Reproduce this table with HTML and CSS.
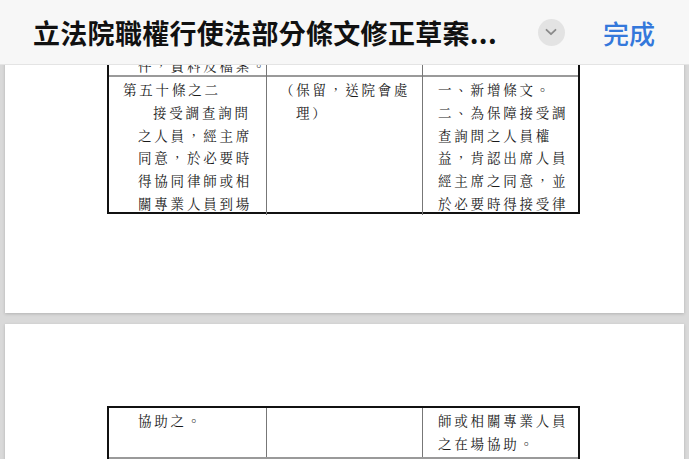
FILE: index.html
```html
<!DOCTYPE html>
<html lang="zh-Hant">
<head>
<meta charset="utf-8">
<title>立法院職權行使法部分條文修正草案</title>
<link rel="stylesheet" href="styles.css">
</head>
<body>
<header class="topbar">
  <div class="title">立法院職權行使法部分條文修正草案...</div>
  <div class="chev">
    <svg width="12" height="8" viewBox="0 0 12 8"><path d="M1.5 1.8 L6 6.2 L10.5 1.8" fill="none" stroke="#8a8a8a" stroke-width="1.8" stroke-linecap="round" stroke-linejoin="round"/></svg>
  </div>
  <div class="done">完成</div>
</header>

<main class="doc">
  <section class="page page1">
    <div class="tbl tbl-end">
      <div class="tr tr-first">
        <div class="td c1"><div class="body">件，資料及檔案。</div></div>
        <div class="td c2"></div>
        <div class="td c3"></div>
      </div>
      <div class="tr tr-main">
        <div class="td c1">
          <div>第五十條之二</div>
          <div class="body indent">接受調查詢問<br>之人員，經主席<br>同意，於必要時<br>得協同律師或相<br>關專業人員到場</div>
        </div>
        <div class="td c2"><div class="hang">（保留，送院會處<br>理）</div></div>
        <div class="td c3">一、新增條文。<br>二、為保障接受調<br>查詢問之人員權<br>益，肯認出席人員<br>經主席之同意，並<br>於必要時得接受律</div>
      </div>
    </div>
  </section>

  <section class="page page2">
    <div class="tbl tbl-start">
      <div class="tr tr-cont">
        <div class="td c1"><div class="body">協助之。</div></div>
        <div class="td c2"></div>
        <div class="td c3">師或相關專業人員<br>之在場協助。</div>
      </div>
      <div class="tr tr-next">
        <div class="td c1"></div>
        <div class="td c2"></div>
        <div class="td c3"></div>
      </div>
    </div>
  </section>
</main>
</body>
</html>
```

FILE: styles.css
```css
* { box-sizing: border-box; }

html, body {
  margin: 0;
  height: 100%;
  overflow: hidden;
}

body {
  background: #d9d9d9;
  font-family: "Noto Serif CJK TC", "Noto Sans CJK TC", sans-serif;
}

.topbar {
  position: fixed;
  top: 0;
  left: 0;
  right: 0;
  z-index: 10;
  height: 65px;
  background: #f7f7f7;
  border-bottom: 1px solid #e4e4e4;
  display: flex;
  align-items: center;
  padding: 0 34px 0 33px;
  font-family: "Noto Sans CJK TC", sans-serif;
}

.title {
  flex: 1;
  font-size: 27px;
  font-weight: 700;
  color: #111;
  letter-spacing: 0.3px;
  white-space: nowrap;
}

.chev {
  width: 27px;
  height: 27px;
  border-radius: 50%;
  background: #e3e3e3;
  display: flex;
  align-items: center;
  justify-content: center;
  margin-right: 38px;
}

.done {
  font-size: 26px;
  color: #3478db;
  font-weight: 500;
}

.doc {
  display: flex;
  flex-direction: column;
  gap: 11px;
}

.page {
  background: #fff;
  margin: 0 5px;
  box-shadow: 0 1px 3px rgba(0, 0, 0, 0.18);
}

.page1 { height: 313px; }

.page2 {
  height: 320px;
  padding-top: 82px;
}

.tbl {
  margin-left: 102px;
  width: 473px;
  border-left: 2px solid #111;
  border-right: 2px solid #111;
}

.tbl-end { border-bottom: 2px solid #111; }
.tbl-start { border-top: 2px solid #111; }

.tr {
  display: grid;
  grid-template-columns: 158px 156px 155px;
}

.tr + .tr { border-top: 2px solid #9a9a9a; }

.td {
  border-right: 1px solid #777;
  font-size: 13.5px;
  line-height: 22.8px;
  letter-spacing: 2.8px;
  color: #1a1a1a;
  white-space: nowrap;
}

.td:last-child { border-right: 0; }

.c1 { padding-left: 14px; }
.c2 { padding-left: 13px; }
.c3 { padding-left: 15px; }

.body { padding-left: 15px; }
.indent { text-indent: 15px; }

.hang {
  padding-left: 16px;
  text-indent: -16px;
}

.tr-first {
  height: 75px;
  padding-top: 54px;
}

.tr-main {
  height: 137px;
}

.tr-main .td { padding-top: 1px; }

.tr-cont .td { padding-top: 1px; }
.tr-cont { height: 49px; }

.tr-next { height: 80px; }
```
